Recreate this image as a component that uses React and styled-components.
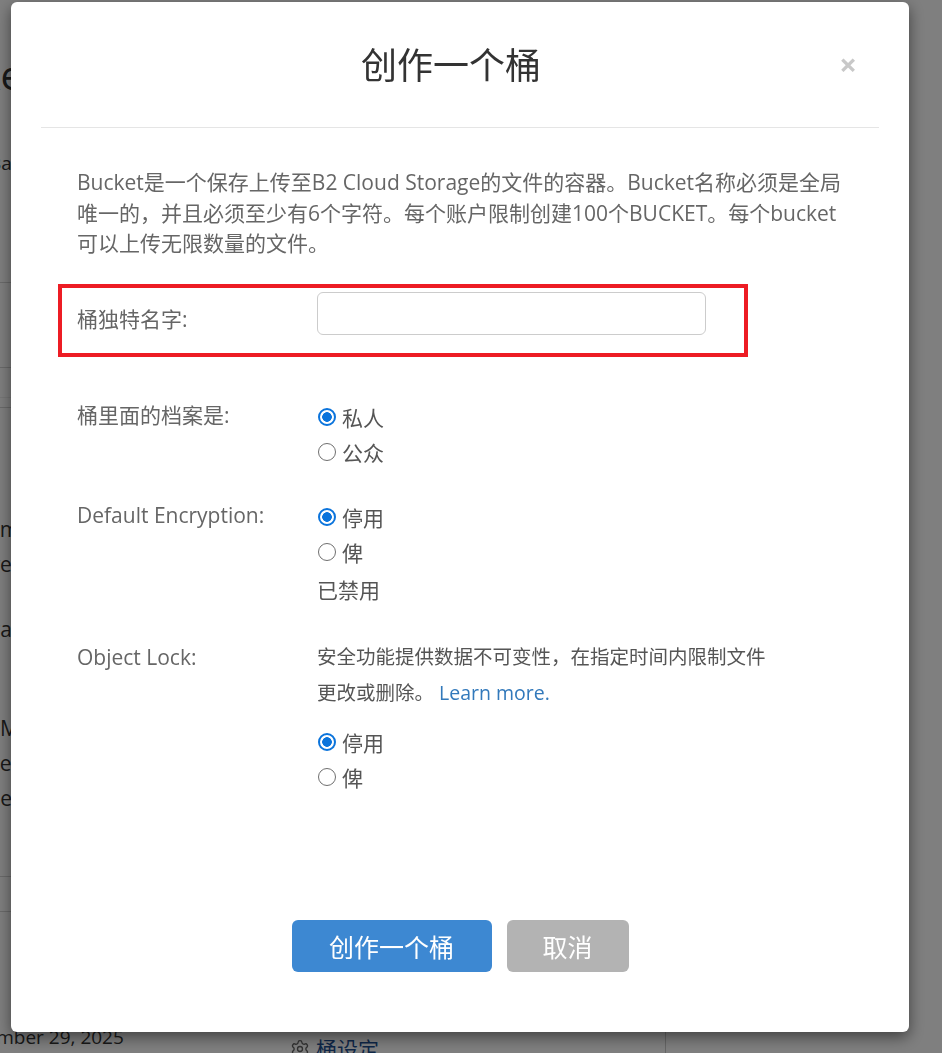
import React from "react";
import styled, { createGlobalStyle } from "styled-components";
import { Settings } from "lucide-react";

const GlobalStyle = createGlobalStyle`
  html, body {
    margin: 0;
    padding: 0;
  }
  body {
    font-family: "Open Sans", "Noto Sans CJK SC", sans-serif;
    background: #fff;
    overflow: hidden;
  }
  * {
    box-sizing: border-box;
  }
`;

/* page behind the modal */

const Page = styled.div`
  height: 1053px;
  display: flex;
  flex-direction: column;
  overflow: hidden;
  color: #333;
`;

const SideList = styled.div`
  width: 280px;
  display: flex;
  flex-direction: column;
`;

const SideRow = styled.div`
  height: ${p => p.$h}px;
  line-height: ${p => p.$h}px;
  font-size: ${p => p.$size || 21}px;
  border-bottom: ${p => (p.$rule ? `1px solid ${p.$rule}` : "none")};
  white-space: nowrap;
  overflow: hidden;
`;

const Clip = styled.span`
  display: inline-block;
  margin-left: -${p => p.$shift || 0}px;
`;

const BottomRow = styled.div`
  margin-top: auto;
  height: 33px;
  display: grid;
  grid-template-columns: 280px 385px 1fr;
  font-size: 19px;
`;

const DateCell = styled.div`
  line-height: 34px;
  white-space: nowrap;
  overflow: hidden;
`;

const SettingsLink = styled.div`
  display: flex;
  align-items: center;
  gap: 6px;
  padding: 14px 0 0 10px;
  color: #1d4f91;
  font-size: 21px;
  line-height: 30px;
  svg {
    color: #666;
  }
`;

const EmptyCell = styled.div`
  border-left: 1px solid #ccc;
`;

/* modal */

const Backdrop = styled.div`
  position: fixed;
  inset: 0;
  background: rgba(0, 0, 0, 0.5);
`;

const Dialog = styled.div`
  margin: 2px 0 0 11px;
  width: 898px;
  height: 1030px;
  background: #fff;
  border-radius: 6px;
  box-shadow: 0 5px 15px rgba(0, 0, 0, 0.5);
  display: flex;
  flex-direction: column;
`;

const Header = styled.div`
  margin: 0 30px;
  height: 126px;
  padding-top: 2px;
  border-bottom: 1px solid #e5e5e5;
  display: grid;
  grid-template-columns: 1fr auto 1fr;
  align-items: center;
`;

const Title = styled.h4`
  margin: 0 18px 0 0;
  grid-column: 2;
  font-size: 36px;
  font-weight: 400;
  color: #333;
  line-height: 1.2;
`;

const Close = styled.button`
  justify-self: end;
  margin: 0 22px 2px 0;
  padding: 0;
  border: none;
  background: none;
  font-family: "Open Sans", sans-serif;
  font-size: 31px;
  font-weight: 700;
  line-height: 1;
  color: #c8c8c8;
  cursor: pointer;
`;

const Body = styled.div`
  padding: 0 66px;
  display: flex;
  flex-direction: column;
  color: #666;
  font-size: 21px;
`;

const Intro = styled.p`
  margin: 39px 0 0;
  line-height: 30.5px;
`;

const Highlight = styled.div`
  margin: 25px 0 0 -19px;
  width: 690px;
  border: 4px solid #ed1c24;
  padding: 4px 0 18px 15px;
`;

const Group = styled.div`
  margin-top: ${p => p.$top || 0}px;
  display: grid;
  grid-template-columns: 240px 1fr;
  align-items: start;
`;

const Label = styled.label`
  line-height: ${p => p.$lh || 30}px;
  padding-top: ${p => p.$pad || 0}px;
`;

const TextInput = styled.input`
  width: 389px;
  height: 43px;
  border: 1px solid #ccc;
  border-radius: 6px;
  padding: 6px 12px;
  font: inherit;
  outline: none;
`;

const RadioList = styled.div`
  display: flex;
  flex-direction: column;
  margin-top: ${p => p.$top || 0}px;
`;

const RadioRow = styled.label`
  height: 35px;
  display: flex;
  align-items: center;
  gap: 6px;
  color: #555;
`;

const Radio = styled.input.attrs({ type: "radio" })`
  appearance: none;
  margin: 0 0 0 1px;
  width: 18px;
  height: 18px;
  border-radius: 50%;
  border: 1.5px solid #6f6f6f;
  background: #fff;
  &:checked {
    border: 2px solid #0b74dc;
    background: radial-gradient(circle, #0b74dc 0 4.5px, #fff 5.1px);
  }
`;

const Help = styled.div`
  margin-top: 5px;
  line-height: 30px;
  color: #555;
`;

const Note = styled.p`
  margin: 0;
  font-size: 19.5px;
  line-height: 36px;
  color: #555;
  a {
    color: #3279bb;
    text-decoration: none;
  }
`;

const Footer = styled.div`
  margin-top: auto;
  padding-bottom: 60px;
  display: flex;
  justify-content: center;
  gap: 15px;
`;

const Button = styled.button`
  width: ${p => p.$w}px;
  height: 52px;
  border: none;
  border-radius: 6px;
  background: ${p => (p.$primary ? "#3d88d2" : "#b3b3b3")};
  color: #fff;
  font-family: "Open Sans", "Noto Sans CJK SC", sans-serif;
  font-size: 25px;
  cursor: pointer;
`;

const RadioGroup = ({ name, options, checked, top }) => (
  <RadioList $top={top}>
    {options.map(o => (
      <RadioRow key={o}>
        <Radio name={name} defaultChecked={o === checked} />
        {o}
      </RadioRow>
    ))}
  </RadioList>
);

export default function App() {
  return (
    <>
      <GlobalStyle />
      <Page>
        <SideList>
          <SideRow $h={50} />
          <SideRow $h={50} $size={40}><Clip $shift={90}>Buckets</Clip></SideRow>
          <SideRow $h={48} />
          <SideRow $h={30} $size={19}><Clip $shift={11}>Backups</Clip></SideRow>
          <SideRow $h={105} $rule="#d5d5d5" />
          <SideRow $h={85} $rule="#d5d5d5" />
          <SideRow $h={30} $rule="#eee" />
          <SideRow $h={10} $rule="#d5d5d5" />
          <SideRow $h={104} />
          <SideRow $h={35}><Clip $shift={29}>Number of files</Clip></SideRow>
          <SideRow $h={35}><Clip $shift={59}>archive1</Clip></SideRow>
          <SideRow $h={30} />
          <SideRow $h={35}><Clip $shift={47}>Overall</Clip></SideRow>
          <SideRow $h={64} />
          <SideRow $h={35}><Clip $shift={0}>Modified</Clip></SideRow>
          <SideRow $h={35}><Clip $shift={22}>Created</Clip></SideRow>
          <SideRow $h={35}><Clip $shift={60}>Disabled</Clip></SideRow>
          <SideRow $h={61} $rule="#d5d5d5" />
          <SideRow $h={35} $rule="#d5d5d5" />
        </SideList>
        <BottomRow>
          <DateCell><Clip $shift={48}>December 29, 2025</Clip></DateCell>
          <SettingsLink>
            <Settings size={20} strokeWidth={1.6} />
            桶设定
          </SettingsLink>
          <EmptyCell />
        </BottomRow>
      </Page>

      <Backdrop>
        <Dialog role="dialog">
          <Header>
            <Title>创作一个桶</Title>
            <Close aria-label="Close">×</Close>
          </Header>
          <Body>
            <Intro>
              Bucket是一个保存上传至B2 Cloud Storage的文件的容器。Bucket名称必须是全局<br />
              唯一的，并且必须至少有6个字符。每个账户限制创建100个BUCKET。每个bucket<br />
              可以上传无限数量的文件。
            </Intro>

            <Highlight>
              <Group>
                <Label $pad={12}>桶独特名字:</Label>
                <TextInput type="text" />
              </Group>
            </Highlight>

            <Group $top={43}>
              <Label>桶里面的档案是:</Label>
              <RadioGroup name="privacy" options={["私人", "公众"]} checked="私人" top={0} />
            </Group>

            <Group $top={30}>
              <Label>Default Encryption:</Label>
              <div>
                <RadioGroup name="encryption" options={["停用", "俾"]} checked="停用" top={0} />
                <Help>已禁用</Help>
              </div>
            </Group>

            <Group $top={34}>
              <Label $lh={36}>Object Lock:</Label>
              <div>
                <Note>
                  安全功能提供数据不可变性，在指定时间内限制文件<br />
                  更改或删除。 <a href="#">Learn more.</a>
                </Note>
                <RadioGroup name="lock" options={["停用", "俾"]} checked="停用" top={14} />
              </div>
            </Group>
          </Body>
          <Footer>
            <Button $primary $w={200}>创作一个桶</Button>
            <Button $w={122}>取消</Button>
          </Footer>
        </Dialog>
      </Backdrop>
    </>
  );
}
